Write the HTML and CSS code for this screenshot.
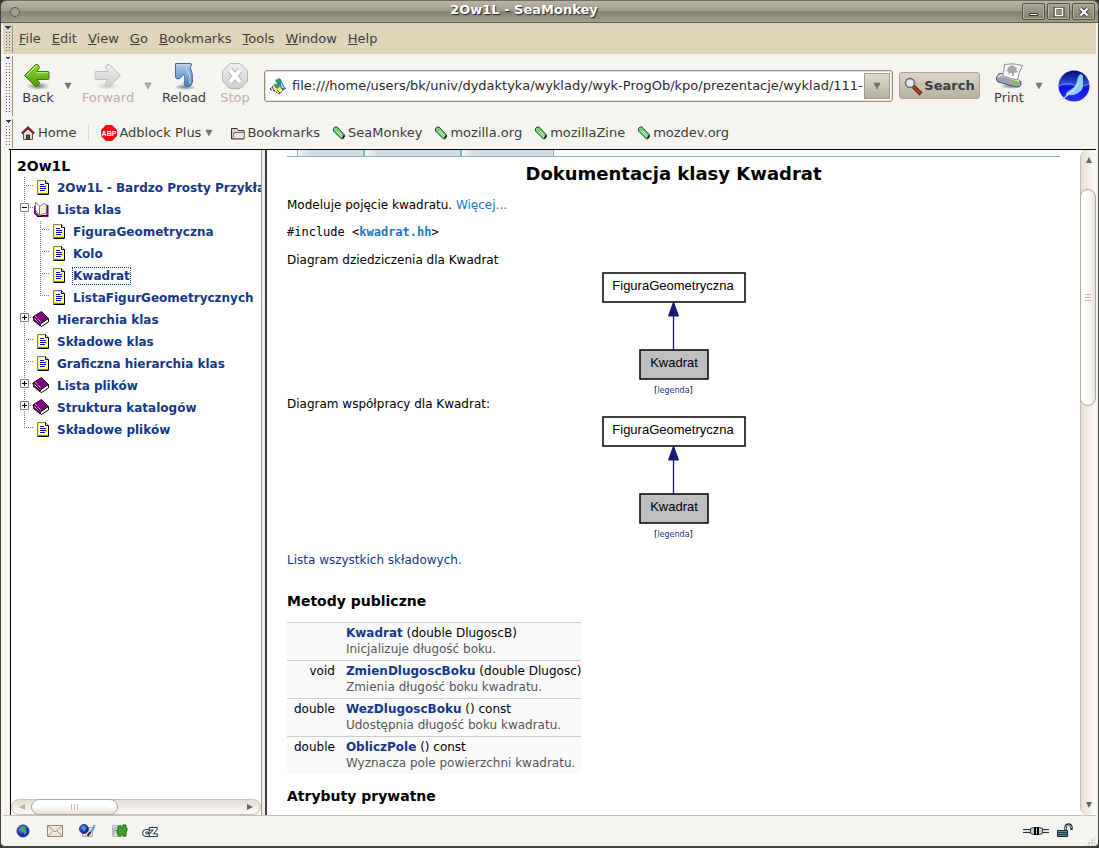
FILE: index.html
```html
<!DOCTYPE html>
<html lang="pl">
<head>
<meta charset="utf-8">
<title>2Ow1L - SeaMonkey</title>
<link rel="stylesheet" href="styles.css">
</head>
<body>
<svg class="sprites" aria-hidden="true">
  <defs>
    <linearGradient id="green" x1="0" y1="0" x2="0" y2="1"><stop offset="0" stop-color="#8fe03c"/><stop offset="1" stop-color="#4e9a06"/></linearGradient>
    <linearGradient id="blue" x1="0" y1="0" x2="0" y2="1"><stop offset="0" stop-color="#b4cdec"/><stop offset="1" stop-color="#4a7dbd"/></linearGradient>
    <linearGradient id="gray" x1="0" y1="0" x2="0" y2="1"><stop offset="0" stop-color="#efefee"/><stop offset="1" stop-color="#cfcfcd"/></linearGradient>
    <radialGradient id="shade"><stop offset="0" stop-color="#000" stop-opacity=".5"/><stop offset="1" stop-color="#000" stop-opacity="0"/></radialGradient>
    <radialGradient id="globe" cx=".4" cy=".35"><stop offset="0" stop-color="#6ea0f5"/><stop offset="1" stop-color="#1a1ec8"/></radialGradient>
    <linearGradient id="sea" x1="0" y1="0" x2="0" y2="1"><stop offset="0" stop-color="#000a7c"/><stop offset=".45" stop-color="#2a4fd8"/><stop offset=".5" stop-color="#0a10e0"/><stop offset="1" stop-color="#3030f0"/></linearGradient>
  </defs>
  <symbol id="tag" viewBox="0 0 14 14"><path d="M1.500 2.500l1.500-1.500h2l7.500 8v1l-2 3h-1l-8-8z" fill="#79cf7d" stroke="#1c4a2a"/><path d="M4 5l6 6M6 5l4 4" stroke="#b8ecb4"/><path d="M12.500 9.500l-2 3" stroke="#111" stroke-width="1.500"/></symbol>
  <symbol id="vline" viewBox="0 0 16 22"><path d="M7.500 0v22" stroke="#808080" stroke-dasharray="1 1"/></symbol>
  <symbol id="node" viewBox="0 0 16 22"><path d="M7.500 0v22M7 8.500h9" stroke="#808080" stroke-dasharray="1 1"/></symbol>
  <symbol id="last" viewBox="0 0 16 22"><path d="M7.500 0v9M7 8.500h9" stroke="#808080" stroke-dasharray="1 1"/></symbol>
  <symbol id="plus" viewBox="0 0 16 22"><path d="M7.500 0v22M7 8.500h9" stroke="#808080" stroke-dasharray="1 1"/><path d="M3.500 4.500h8v8h-8z" fill="#fff" stroke="#808080"/><path d="M5 8.500h5M7.500 6v5" stroke="#000"/></symbol>
  <symbol id="minus" viewBox="0 0 16 22"><path d="M7.500 0v22M7 8.500h9" stroke="#808080" stroke-dasharray="1 1"/><path d="M3.500 4.500h8v8h-8z" fill="#fff" stroke="#808080"/><path d="M5 8.500h5" stroke="#000"/></symbol>
  <symbol id="doc" viewBox="0 0 24 22"><path d="M4.500 3.500h8l3 3v10h-11z" fill="#fff" stroke="#808080"/><path d="M5.500 4.500h6M5.500 5v11M7 15.500h7M13.500 8v7" stroke="#ff0" stroke-dasharray="2 1"/><path d="M12.500 3.500v3h3v11h-11" fill="none" stroke="#000"/><path d="M7 7.500h4M7 9.500h6M7 11.500h6M7 13.500h5" stroke="#0000e0"/></symbol>
  <symbol id="book" viewBox="0 0 24 22"><path d="M0.500 7.500l8-5 7 7-8 5z" fill="#800080" stroke="#300030"/><path d="M8 14.500l7.500-5v3.500l-7 4.500-1.500-1z" fill="#fff" stroke="#000"/><path d="M0.500 7.500v3l7 6" fill="none" stroke="#400040" stroke-width="2"/><path d="M2 7l6 6" stroke="#fff" stroke-dasharray="1 1"/></symbol>
  <symbol id="openbook" viewBox="0 0 24 22"><path d="M2 7v7l3 3h9.500v-11" fill="#fff" stroke="#800080" stroke-width="2"/><path d="M2.500 3v8l4 5.500V7z" fill="#fff" stroke="#777"/><path d="M6.500 16.500V8l4-3.500 3 1V14l-4 1z" fill="#fffde0" stroke="#777"/><path d="M8.500 9v5M10.500 7v6M12.500 7v6" stroke="#ee0" stroke-dasharray="1 1"/><path d="M4 17.500h4l2-1h5" fill="none" stroke="#000"/></symbol>
  <symbol id="down" viewBox="0 0 8 8"><path d="M.8 1h6.400L4 7z" fill="currentColor" stroke="#555" stroke-opacity=".45" stroke-width=".8"/></symbol>
  <symbol id="diagram" viewBox="0 0 144 108">
    <path d="M1 1h142v29H1z" fill="#fff" stroke="#000" stroke-width="1.500"/>
    <path d="M71.500 40v38" stroke="#191970" stroke-width="1.300"/><path d="M71.500 30l5 14h-10z" fill="#191970" stroke="#191970"/>
    <path d="M38 78h68v29H38z" fill="#bfbfbf" stroke="#000" stroke-width="1.500"/>
  </symbol>
</svg>

<div class="window">
  <header class="titlebar">
    <span class="orb"></span>
    <span class="caption">2Ow1L - SeaMonkey</span>
    <button class="win" aria-label="Minimize"><svg width="14" height="12"><path d="M2.500 7.500h8v2h-8z" fill="#fff" stroke="#333"/></svg></button>
    <button class="win" aria-label="Maximize"><svg width="14" height="12"><path d="M3 2.500h8v7H3z" fill="none" stroke="#444" stroke-width="3"/><path d="M3.500 2.500h7v7h-7z" fill="none" stroke="#fff" stroke-width="1.500"/></svg></button>
    <button class="win" aria-label="Close"><svg width="14" height="12"><path d="M3.500 2.500l7 7m0-7l-7 7" stroke="#444" stroke-width="4"/><path d="M3.500 2.500l7 7m0-7l-7 7" stroke="#fff" stroke-width="2"/></svg></button>
  </header>

  <div class="client">
    <nav class="bar menubar">
      <span class="grip"></span>
      <button><u>F</u>ile</button><button><u>E</u>dit</button><button><u>V</u>iew</button><button><u>G</u>o</button><button><u>B</u>ookmarks</button><button><u>T</u>ools</button><button><u>W</u>indow</button><button><u>H</u>elp</button>
    </nav>

    <div class="bar navbar">
      <span class="grip"></span>
      <button class="tool back"><svg width="28" height="28" viewBox="0 0 28 28"><ellipse cx="14" cy="24" rx="12" ry="4" fill="url(#shade)"/><path d="M.5 13.500L11.500 2.500q3-1 4 3l-2.500 4H24q1 0 1 1v6q0 1-1 1H13l2.500 3q0 4-4 4z" fill="url(#green)" stroke="#3b7d08"/><path d="M2.500 13.500l9.500-9.500M12.500 10.700H23.500" stroke="#c3f59a" fill="none"/></svg>Back</button>
      <button class="drop" aria-label="Back history"><svg width="8" height="8"><use href="#down"/></svg></button>
      <button class="tool forward off"><svg width="28" height="28" viewBox="0 0 28 28"><ellipse cx="13" cy="24" rx="12" ry="4" fill="url(#shade)" opacity=".35"/><path d="M26.500 13.500L15.500 2.500q-3-1-4 3l2.500 4H2q-1 0-1 1v6q0 1 1 1H14l-2.500 3q0 4 4 4z" fill="url(#gray)" stroke="#bdbdbb"/></svg>Forward</button>
      <button class="drop off" aria-label="Forward history"><svg width="8" height="8"><use href="#down"/></svg></button>
      <button class="tool reload"><svg width="28" height="28" viewBox="0 0 28 28"><ellipse cx="15" cy="25" rx="11" ry="3" fill="url(#shade)"/><path d="M5.500 1.500H20q2.500 0 1.500 2l-1.500 2q3 5 2.500 14-.5 4-3.500 5h-2q-3-1-3-3 2-6-.5-9l-3.500 4q-4 1-4.500-1V3z" fill="url(#blue)" stroke="#3c6ba8"/><path d="M7 3h12l-3 4q5 5 4 15" fill="none" stroke="#c9dcf2"/></svg>Reload</button>
      <button class="tool stop off"><svg width="28" height="28" viewBox="0 0 28 28"><ellipse cx="14" cy="25" rx="11" ry="3" fill="url(#shade)" opacity=".3"/><path d="M9 1.500h10l7.500 7.500v10L19 26.500H9L1.500 19V9z" fill="url(#gray)" stroke="#b5b5b3"/><path d="M9 8l10 12m0-12L9 20" stroke="#bababa" stroke-width="6"/><path d="M9 8l10 12m0-12L9 20" stroke="#fff" stroke-width="4"/></svg>Stop</button>
      <div class="location">
        <svg width="18" height="18" viewBox="0 0 18 18"><path d="M1 12l5-5 9 4-4 6z" fill="#ffe" stroke="#224" stroke-dasharray="2 1"/><path d="M3 12l6-4M5 14l6-4M8 15l5-4" stroke="#ee0" stroke-width="1.500"/><path d="M3 10l3 4M8 13l3 3M13 13l4-2" stroke="#33c"/><path d="M11 2l5 10-4-1z" fill="#bdf" stroke="#36b"/><path d="M6 3l5-2v8l-3 3-3-3 3-2z" fill="#2c9a5a"/></svg>
        <input type="text" aria-label="Location" value="file:///home/users/bk/univ/dydaktyka/wyklady/wyk-ProgOb/kpo/prezentacje/wyklad/111-">
        <button aria-label="Show history"><svg width="8" height="8"><use href="#down"/></svg></button>
      </div>
      <button class="search"><svg width="18" height="18" viewBox="0 0 18 18"><path d="M9 9l8 8" stroke="#5e1c05" stroke-width="4"/><path d="M9.500 9.500l7 7" stroke="#b54718" stroke-width="2"/><circle cx="6" cy="6" r="4.500" fill="#dfe6ec" stroke="#666" stroke-width="1.500"/></svg>Search</button>
      <button class="tool print"><svg width="28" height="28" viewBox="0 0 28 28"><ellipse cx="16" cy="24" rx="11" ry="3" fill="url(#shade)"/><path d="M1.500 15.500q2-5 5-4l18 7q2 1 1.500 4-1 3-5 2.500L3 20q-2-2-1.500-4.500z" fill="#9aa3b5" stroke="#4c5364"/><path d="M3 15l3-2 18 6" fill="none" stroke="#e5e8ee" stroke-width="2"/><path d="M7.500 13.500q2-5 2-11 8-2 18 1-4 7-5 14.500-7-1-15-4.500z" fill="#fbfbfb" stroke="#8c8c8c"/><path d="M12 12l2-2-3-1 2-2-1-1 5-3 5 3-1 2 2 2-4 1v3h-2v-3z" fill="#aaa"/><path d="M18 19.500l4 1.500" stroke="#73d216" stroke-width="3"/></svg>Print</button>
      <button class="drop thin" aria-label="Print options"><svg width="8" height="8"><use href="#down"/></svg></button>
      <svg class="logo" width="32" height="32" viewBox="0 0 32 32"><circle cx="16" cy="16" r="15.500" fill="url(#sea)"/><path d="M1 16q7-4 15-1t15-1" stroke="#6b8cf0" fill="none"/><path d="M0 30q6-2 8-5 0-3 4-5 6-3 7-9 1-6 4-7l2 2q0 3 0 6 1 8-5 11-4 3-9 2-4 4-11 5z" fill="#8ccbff"/><path d="M8 25q9-3 13-13" stroke="#d8f0ff" fill="none"/></svg>
    </div>

    <nav class="bar bookmarks">
      <span class="grip"></span>
      <a class="home" href="#home"><svg width="14" height="14" viewBox="0 0 14 14"><path d="M2.500 7v6.500h9V7L7 3z" fill="#ddd" stroke="#555"/><path d="M5.500 9h3v4.500h-3z" fill="#6b4a2a" stroke="#333"/><path d="M.8 7.500L7 1.500l6.200 6" fill="none" stroke="#7a2020" stroke-width="2"/></svg>Home</a>
      <span class="sep"></span>
      <button class="abp"><svg width="16" height="16" viewBox="0 0 16 16"><path d="M5 0h6l5 5v6l-5 5H5l-5-5V5z" fill="#f00d0d"/><text x="8" y="11" text-anchor="middle" class="abptext">ABP</text></svg>Adblock Plus<svg width="8" height="8"><use href="#down"/></svg></button>
      <button class="folder"><svg width="14" height="13" viewBox="0 0 14 13"><path d="M.5 12V1.500H6l1.500 2H13V12z" fill="#d9cfc6" stroke="#333"/><path d="M2 11.500l1-6h10.500l-.5 6z" fill="#efe6de" stroke="#776"/></svg>Bookmarks</button>
      <a class="link" href="#seamonkey"><svg width="14" height="14"><use href="#tag"/></svg>SeaMonkey</a>
      <a class="link" href="#mozilla"><svg width="14" height="14"><use href="#tag"/></svg>mozilla.org</a>
      <a class="link" href="#zine"><svg width="14" height="14"><use href="#tag"/></svg>mozillaZine</a>
      <a class="link" href="#mozdev"><svg width="14" height="14"><use href="#tag"/></svg>mozdev.org</a>
    </nav>

    <div class="frames">
      <div class="gutter"></div>
      <aside class="treeframe">
        <div class="tree">
          <h3>2Ow1L</h3>
          <ul>
            <li><svg class="n"><use href="#node"/></svg><svg class="i"><use href="#doc"/></svg><a href="#main">2Ow1L - Bardzo Prosty Przykład</a></li>
            <li><svg class="n"><use href="#minus"/></svg><svg class="i"><use href="#openbook"/></svg><a href="#klasy">Lista klas</a></li>
            <li><svg class="n"><use href="#vline"/></svg><svg class="n"><use href="#node"/></svg><svg class="i"><use href="#doc"/></svg><a href="#figura">FiguraGeometryczna</a></li>
            <li><svg class="n"><use href="#vline"/></svg><svg class="n"><use href="#node"/></svg><svg class="i"><use href="#doc"/></svg><a href="#kolo">Kolo</a></li>
            <li><svg class="n"><use href="#vline"/></svg><svg class="n"><use href="#node"/></svg><svg class="i"><use href="#doc"/></svg><a class="focused" href="#kwadrat">Kwadrat</a></li>
            <li><svg class="n"><use href="#vline"/></svg><svg class="n"><use href="#last"/></svg><svg class="i"><use href="#doc"/></svg><a href="#listafigur">ListaFigurGeometrycznych</a></li>
            <li><svg class="n"><use href="#plus"/></svg><svg class="i"><use href="#book"/></svg><a href="#hierarchia">Hierarchia klas</a></li>
            <li><svg class="n"><use href="#node"/></svg><svg class="i"><use href="#doc"/></svg><a href="#skladowe">Składowe klas</a></li>
            <li><svg class="n"><use href="#node"/></svg><svg class="i"><use href="#doc"/></svg><a href="#graficzna">Graficzna hierarchia klas</a></li>
            <li><svg class="n"><use href="#plus"/></svg><svg class="i"><use href="#book"/></svg><a href="#pliki">Lista plików</a></li>
            <li><svg class="n"><use href="#plus"/></svg><svg class="i"><use href="#book"/></svg><a href="#katalogi">Struktura katalogów</a></li>
            <li><svg class="n"><use href="#last"/></svg><svg class="i"><use href="#doc"/></svg><a href="#skladoweplikow">Składowe plików</a></li>
          </ul>
        </div>
        <div class="hscroll">
          <svg class="dim" width="20" height="16"><path d="M13 5v6L7 8z" fill="currentColor"/></svg>
          <span class="thumb"><i></i><i></i><i></i></span>
          <svg class="end" width="20" height="16"><path d="M7 5v6l6-3z" fill="currentColor"/></svg>
        </div>
      </aside>
      <div class="splitter"></div>
      <main class="page">
        <div class="tabs"><span class="t1"></span><span class="t2"></span><span class="t3"></span></div>
        <h1>Dokumentacja klasy Kwadrat</h1>
        <p class="intro">Modeluje pojęcie kwadratu. <a href="#details">Więcej...</a></p>
        <p class="include">#include &lt;<a href="#hh">kwadrat.hh</a>&gt;</p>
        <p class="lead">Diagram dziedziczenia dla Kwadrat</p>
        <figure>
          <svg width="144" height="108" role="img" aria-label="Diagram dziedziczenia"><use href="#diagram"/><text x="71" y="18">FiguraGeometryczna</text><text x="72" y="95">Kwadrat</text></svg>
          <figcaption>[<a href="#legend">legenda</a>]</figcaption>
        </figure>
        <p class="lead">Diagram współpracy dla Kwadrat:</p>
        <figure>
          <svg width="144" height="108" role="img" aria-label="Diagram współpracy"><use href="#diagram"/><text x="71" y="18">FiguraGeometryczna</text><text x="72" y="95">Kwadrat</text></svg>
          <figcaption>[<a href="#legend">legenda</a>]</figcaption>
        </figure>
        <p class="all"><a href="#members">Lista wszystkich składowych.</a></p>
        <h2>Metody publiczne</h2>
        <table>
          <tr><td></td><td><a href="#m1">Kwadrat</a> (double DlugoscB)<div>Inicjalizuje długość boku.</div></td></tr>
          <tr><td>void</td><td><a href="#m2">ZmienDlugoscBoku</a> (double Dlugosc)<div>Zmienia długość boku kwadratu.</div></td></tr>
          <tr><td>double</td><td><a href="#m3">WezDlugoscBoku</a> () const<div>Udostępnia długość boku kwadratu.</div></td></tr>
          <tr><td>double</td><td><a href="#m4">ObliczPole</a> () const<div>Wyznacza pole powierzchni kwadratu.</div></td></tr>
        </table>
        <h2 class="next">Atrybuty prywatne</h2>
      </main>
      <div class="vscroll">
        <svg width="16" height="20"><path d="M5 13h6L8 7z" fill="currentColor"/></svg>
        <span class="before"></span>
        <span class="thumb"><i></i><i></i><i></i></span>
        <span class="after"></span>
        <svg width="16" height="20"><path d="M5 7h6l-3 6z" fill="currentColor"/></svg>
      </div>
    </div>

    <footer class="status">
      <button aria-label="Navigator"><svg width="18" height="16"><circle cx="9" cy="8" r="6" fill="url(#globe)" stroke="#2a3a9a"/><path d="M8 3l4 1-1 3 2 2-2 3-2-3-3-2z" fill="#3fae5a"/></svg></button>
      <button aria-label="Mail"><svg width="18" height="16"><path d="M1.500 2.500h15v11h-15z" fill="#efe6de" stroke="#9a8572"/><path d="M2 3l7 6 7-6M2 13l5-5m9 5l-5-5" fill="none" stroke="#a99685"/></svg></button>
      <button aria-label="Composer"><svg width="18" height="16"><path d="M4.500 4.500h10v9h-10z" fill="#ddd" stroke="#aaa"/><circle cx="6" cy="6" r="4.500" fill="url(#globe)" stroke="#2a3a9a"/><path d="M5 3l3 2-2 4z" fill="#4b6"/><path d="M16.500 2q-1 5-4 7" stroke="#5a9bd0" stroke-width="2" fill="none"/><path d="M12.500 9l-3 4" stroke="#222" stroke-width="2"/></svg></button>
      <button aria-label="Address book"><svg width="18" height="16"><path d="M2.500 2.500h13v11h-13z" fill="#ddd" stroke="#bbb"/><path d="M4 5h4M4 7.500h3M4 5v7" stroke="#999"/><path d="M8 3h3v2h2V2h3v3h1v3h-1v5h-3v-2h-2v2H8v-3H7V7h1z" fill="#3da52a" stroke="#236b10"/></svg></button>
      <button aria-label="ChatZilla"><svg width="18" height="14"><text x="8" y="12" text-anchor="middle" class="cz">cZ</text></svg></button>
      <span class="spring"></span>
      <svg width="26" height="14"><path d="M0 7h26" stroke="#234" stroke-width="4"/><path d="M0 7h26" stroke="#dce4ea" stroke-width="2"/><path d="M7.500 4.500l3-1h6l3 1v5l-3 1h-6l-3-1z" fill="#c3cbd2" stroke="#345"/><path d="M12 3v8M15 3v8" stroke="#000" stroke-width="2"/></svg>
      <svg width="18" height="16"><path d="M9.500 8V5q0-3.500 3-3.500t3 3.500v2" fill="none" stroke="#1c2b38" stroke-width="2.500"/><path d="M9.500 8V5q0-3 3-3t3 3" fill="none" stroke="#9fc0d4"/><path d="M1.500 7.500h10v6h-10z" fill="#668b9d" stroke="#16242f"/><path d="M2 9.500h9m-9 2h9" stroke="#263d4a"/></svg>
      <span class="resize"></span>
    </footer>
  </div>
</div>
</body>
</html>
```
FILE: styles.css
```css
* { box-sizing: border-box; }
body {
  margin: 0;
  background: #3b3936;
  font: 12px/16px "DejaVu Sans", Verdana, sans-serif;
  color: #000;
}
.sprites { position: absolute; width: 0; height: 0; }
button, input { font: inherit; color: inherit; border: 0; padding: 0; margin: 0; background: none; }
svg { display: block; flex: none; overflow: visible; }
a { color: #153788; text-decoration: none; }
h1, h2, h3, p, ul, figure { margin: 0; padding: 0; }

.window {
  display: flex;
  flex-direction: column;
  height: 100vh;
  overflow: hidden;
  padding: 0 1px 2px 1px;
  background: #45433f;
  border-radius: 6px 6px 5px 5px;
}
.titlebar {
  display: flex;
  align-items: center;
  gap: 2px;
  height: 23px;
  padding: 0 3px 0 9px;
  border-top: 1px solid #6c695f;
  border-bottom: 1px solid #5f5c50;
  border-radius: 6px 6px 0 0;
  background: linear-gradient(#bab6a8, #a19d8c 45%, #87836f 52%, #a09c8b);
}
.orb { width: 10px; height: 10px; border: 1px solid #5c594c; border-radius: 50%; background: #a5a18f; }
.caption {
  flex: 1;
  padding: 0 0 3px 6px;
  text-align: center;
  font-size: 13px;
  font-weight: bold;
  color: #fff;
  text-shadow: 1px 1px 1px #222;
}
.win {
  display: flex;
  align-items: center;
  justify-content: center;
  width: 23px;
  height: 17px;
  border: 1px solid #55524a;
  border-radius: 2px;
  background: linear-gradient(#a9a593, #87836f);
  box-shadow: inset 0 0 0 1px #b5b1a1;
}
.client {
  flex: 1;
  display: flex;
  flex-direction: column;
  min-height: 0;
  padding: 0 2px;
  background: #f6f4f1;
  border-radius: 0 0 4px 4px;
}
.bar { display: flex; align-items: center; font-size: 13px; color: #3c3c3c; }
.grip {
  flex: none;
  align-self: stretch;
  width: 10px;
  margin: 2px 0 1px;
  padding: 7px 2px 2px 3px;
  border-right: 1px solid #9a917f;
  background: conic-gradient(from -45deg at 50% 100%, #33316b 90deg, transparent 0) 2px 1px / 6px 3px no-repeat;
}
.grip::before {
  content: "";
  display: block;
  height: 100%;
  background: conic-gradient(#33316b 0 0) 0 0 / 1px 1px;
  background: linear-gradient(90deg, #5a5888 1px, transparent 1px) 0 0 / 3px 100%;
  mask: linear-gradient(#000 1px, transparent 1px) 0 0 / 100% 3px;
}
.menubar { height: 31px; background: #dfd6b9; gap: 11px; }
.menubar .grip { margin-right: -5px; }
.navbar { height: 63px; }
.navbar .tool { padding-bottom: 3px; }
.bookmarks { height: 32px; }
.bookmarks a, .bookmarks button { display: flex; align-items: center; gap: 2px; color: inherit; }

.tool { display: flex; flex-direction: column; align-items: center; justify-content: center; gap: 0; flex: none; }
.back { width: 40px; margin-left: 5px; }
.forward { width: 60px; }
.reload { width: 52px; }
.stop { width: 50px; }
.print { width: 50px; margin-left: 4px; }
.drop { display: flex; justify-content: center; width: 20px; color: #777; }
.drop.thin { width: 10px; }
.off { color: #bcb1a4; }
.location {
  flex: 1;
  display: flex;
  align-items: center;
  gap: 5px;
  min-width: 0;
  height: 32px;
  margin: 0 6px 0 4px;
  padding: 2px 2px 2px 4px;
  border: 1px solid #998d7b;
  border-radius: 3px;
  background: #fff;
  box-shadow: inset 0 0 0 1px #e6e0d8;
}
.location input { flex: 1; min-width: 0; height: 24px; color: #2b2b2b; outline: 0; }
.location button {
  display: flex;
  align-items: center;
  justify-content: center;
  width: 26px;
  height: 26px;
  margin-left: -5px;
  border: 1px solid #a39c8a;
  color: #777;
  background: linear-gradient(#dedbd0, #b5b09f);
}
.search {
  display: flex;
  align-items: center;
  justify-content: center;
  gap: 2px;
  width: 81px;
  height: 27px;
  border: 1px solid #a9a391;
  border-radius: 3px;
  background: linear-gradient(#d9d6ca, #b6b1a0);
  font-weight: bold;
}
.logo { margin: 0 6px 0 14px; }

.bookmarks .home { margin-left: 8px; gap: 3px; }
.sep { width: 1px; height: 16px; margin: 0 12px; background: #ded8cf; }
.bookmarks .abp svg:last-child { margin-left: 2px; color: #777; }
.abptext { font: bold 7px "Liberation Sans", Arial, sans-serif; fill: #fff; }
.bookmarks .folder { margin-left: 18px; }
.bookmarks .link { margin-left: 12px; }

.frames { flex: 1; display: flex; min-height: 0; margin-left: 6px; border-top: 1px solid #000; background: #fff; }
.gutter { flex: none; width: 2px; background: #f6f4f1; border-right: 1px solid #000; }
.treeframe { flex: none; display: flex; flex-direction: column; width: 250px; overflow: hidden; }
.tree { flex: 1; padding: 6px; overflow: hidden; }
.tree h3 { font-size: 14px; line-height: 21px; }
.tree ul { list-style: none; }
.tree li { display: flex; align-items: center; height: 22px; font-weight: bold; white-space: nowrap; }
.tree .n { width: 16px; height: 22px; }
.tree .i { width: 24px; height: 22px; }
.focused { outline: 1px dotted #153788; }

.hscroll { display: flex; height: 16px; border: 1px solid #cbc3b6; border-radius: 8px; background: linear-gradient(#e3ddd5, #fbfaf8); color: #666; }
.dim { color: #bbb3a6; }
.hscroll svg { margin-top: -1px; }
.hscroll .end { margin-left: auto; }
.thumb { display: flex; align-items: center; justify-content: center; gap: 2px; border: 1px solid #b3a898; border-radius: 8px; }
.thumb i { background: #c4bbae; }
.hscroll .thumb { width: 87px; margin: -1px; background: linear-gradient(#fff 40%, #e8e3dc); }
.hscroll i { width: 1px; height: 6px; }
.splitter { flex: none; width: 6px; border-left: 1px solid #999; border-right: 2px solid #3f3f3f; background: #f1efec; }

.page { flex: 1; min-width: 0; padding: 0 20px; overflow: hidden; }
.tabs { display: flex; height: 7px; padding-left: 10px; border-bottom: 1px solid #84b0c7; }
.tabs span { border: 0 solid #84b0c7; border-right-width: 2px; background: linear-gradient(90deg, #f4f6f8, #d2dfe6 12px); }
.tabs .t1 { width: 68px; border-left-width: 1px; }
.tabs .t2 { width: 97px; }
.tabs .t3 { width: 92px; border-right-width: 1px; }
h1 { margin-top: 5px; font-size: 18px; line-height: 24px; text-align: center; }
.intro { margin-top: 11px; }
.intro a { color: #1b77c5; }
.include { margin-top: 12px; font-family: "DejaVu Sans Mono", monospace; line-height: 15px; }
.include a { font-weight: bold; color: #1b77c5; }
.include + .lead { margin-top: 12px; }
.lead { line-height: 16px; }
figure { display: flex; flex-direction: column; align-items: center; margin-top: 4px; }
figure text { font: 13px "Liberation Sans", Arial, sans-serif; text-anchor: middle; }
figcaption { margin-top: 5px; font-size: 8px; line-height: 11px; }
.all { margin-top: 12px; }
h2 { margin-top: 24px; font-size: 14px; line-height: 18px; }
h2.next { margin-top: 13px; }
table { margin-top: 12px; border-collapse: collapse; background: #fafafa; }
td { padding: 2px 0 3px; border-top: 1px solid #ccc; vertical-align: top; white-space: nowrap; }
td:first-child { padding: 2px 11px 0 7px; text-align: right; }
td a { font-weight: bold; }
td div { color: #555; }

.vscroll { flex: none; display: flex; flex-direction: column; width: 16px; border-left: 1px solid #c6beb1; border-radius: 8px; background: linear-gradient(90deg, #e6e1d9, #fbfaf8); color: #666; }
.vscroll .before { flex: 19; }
.vscroll .after { flex: 391; }
.vscroll .thumb { flex: 216; flex-direction: column; margin-left: -1px; background: linear-gradient(90deg, #fff 40%, #e8e3dc); }
.vscroll i { width: 6px; height: 1px; }

.status { display: flex; align-items: center; gap: 13px; height: 31px; padding: 0 1px 0 11px; border-top: 1px solid #c9c1b4; }
.status button + button { margin-left: 1px; }
.status svg { display: block; }
.spring { flex: 1; }
.status > svg + svg { margin-left: -6px; }
.cz { font: bold 11px "DejaVu Sans", sans-serif; fill: #fff; stroke: #234; stroke-width: 2px; paint-order: stroke; }
.resize { width: 10px; height: 10px; margin-left: -2px; align-self: flex-end; background: radial-gradient(circle at 1px 1px, #d6cfc5 40%, transparent 60%) 0 0 / 3px 3px; clip-path: polygon(100% 0, 100% 100%, 0 100%); }
```
